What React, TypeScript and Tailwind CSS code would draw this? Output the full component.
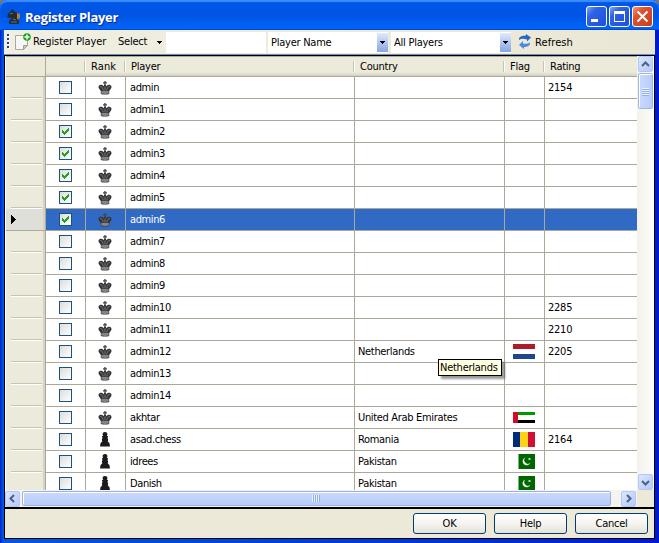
import React from "react";

type Row = { name: string; checked?: boolean; selected?: boolean; pawn?: boolean; country?: string; flag?: string; rating?: string };

const rows: Row[] = [
  { name: "admin", rating: "2154" },
  { name: "admin1" },
  { name: "admin2", checked: true },
  { name: "admin3", checked: true },
  { name: "admin4", checked: true },
  { name: "admin5", checked: true },
  { name: "admin6", checked: true, selected: true },
  { name: "admin7" },
  { name: "admin8" },
  { name: "admin9" },
  { name: "admin10", rating: "2285" },
  { name: "admin11", rating: "2210" },
  { name: "admin12", country: "Netherlands", flag: "nl", rating: "2205" },
  { name: "admin13" },
  { name: "admin14" },
  { name: "akhtar", country: "United Arab Emirates", flag: "ae" },
  { name: "asad.chess", pawn: true, country: "Romania", flag: "ro", rating: "2164" },
  { name: "idrees", pawn: true, country: "Pakistan", flag: "pk" },
  { name: "Danish", pawn: true, country: "Pakistan", flag: "pk" },
];

function King() {
  return (
    <svg width="14" height="14" viewBox="0 0 14 14">
      <path d="M6.300 0h1.400v1.200h1.300v1.200h-1.300v1.400h-1.400V2.400H5V1.200h1.300z" fill="#4a4a4a" />
      <path d="M7 3.400c1 0 1.400 1 1.200 2C9.200 4 10.600 3.500 12 4c1.700.6 1.900 2.300.8 3.700L11.200 10v3q-4.200 1.200-8.400 0v-3L1.200 7.700C.1 6.300.3 4.600 2 4c1.400-.5 2.800 0 3.800 1.400-.2-1 .2-2 1.200-2z" fill="#343434" />
      <path d="M2 5.700q1.500-.8 2.700 1.500L5.200 9.500M12 5.700q-1.500-.8-2.700 1.500L8.800 9.500M7 5.500v3.500" fill="none" stroke="#777" strokeWidth="1" />
      <path d="M3.200 10.200q3.800-1 7.600 0v2.300q-3.800.8-7.600 0z" fill="#858585" />
    </svg>
  );
}

function Pawn() {
  return (
    <svg width="12" height="15" viewBox="0 0 12 15">
      <path d="M6 0C7.700 0 8.600 1 8.400 2.400L7.800 3.500 9.200 4.600 8.500 5.700 9.200 8 8.700 9.500 10.400 11 11 14.500H1L1.600 11 3.300 9.500 2.800 8 3.500 5.700 2.800 4.600 4.200 3.500 3.600 2.400C3.400 1 4.300 0 6 0z" fill="#1c191a" />
    </svg>
  );
}

function Check({ on }: { on?: boolean }) {
  return (
    <span className="block h-[13px] w-[13px] border border-[#1c5180] bg-linear-to-br from-[#dcdcd7] to-white">
      {on && (
        <svg className="block" width="11" height="11" viewBox="0 0 11 11" shapeRendering="crispEdges">
          <path d="M2 4h1v1h1v1h1V5h1V4h1V3h1V2h1v3H8v1H7v1H6v1H5v1H4V8H3V7H2z" fill="#21a121" />
        </svg>
      )}
    </span>
  );
}

function Flag({ code }: { code?: string }) {
  if (code === "nl")
    return (
      <svg width="22" height="15"><path d="M0 0h22v15H0z" fill="#fff" /><path d="M0 0h22v5H0z" fill="#ae1c28" /><path d="M0 10h22v5H0z" fill="#21468b" /></svg>
    );
  if (code === "ae")
    return (
      <svg width="22" height="11" shapeRendering="crispEdges"><path d="M0 0h22v11H0z" fill="#fff" /><path d="M5 0h17v3H5z" fill="#009a00" /><path d="M5 8h17v3H5z" /><path d="M0 0h5v11H0z" fill="#d40a28" /></svg>
    );
  if (code === "ro")
    return (
      <svg width="22" height="15" shapeRendering="crispEdges"><path d="M0 0h7v15H0z" fill="#002b7f" /><path d="M7 0h8v15H7z" fill="#fcd116" /><path d="M15 0h7v15h-7z" fill="#d21034" /></svg>
    );
  if (code === "pk")
    return (
      <svg className="ml-[5px]" width="17" height="15"><path d="M0 0h17v15H0z" fill="#006600" /><path d="M0 0h1v15H0z" fill="#7fb27f" /><path d="M7.500 3.500A4 4 0 1 0 12.300 8.800 3.400 3.400 0 0 1 7.500 3.500z" fill="#e8f3e8" /><path d="M10.500 4h2v2h-2z" fill="#b9d8b9" /></svg>
    );
  return null;
}

function HeaderCell({ label, className }: { label: string; className: string }) {
  return (
    <div className={`flex h-full items-center ${className}`}>
      <span className="h-[11px] w-[2px] shrink-0 border-l border-[#c7c5b2] bg-white" />
      <span className="pl-[5px]">{label}</span>
    </div>
  );
}

function Combo({ label }: { label: string }) {
  return (
    <div className="flex h-[21px] w-[120px] bg-white">
      <span className="flex-1 pl-[3px] leading-[22px]">{label}</span>
      <span className="mt-px flex h-[19px] w-[11px] items-center justify-center bg-linear-to-b from-[#dfebfd] to-[#85a6e0]">
        <svg width="5" height="3" shapeRendering="crispEdges"><path d="M0 0h5v1H4v1H3v1H2V2H1V1H0z" /></svg>
      </span>
    </div>
  );
}

function Arrow({ d }: { d: string }) {
  return (
    <span className="flex h-[16px] w-[15px] shrink-0 items-center justify-center rounded-[2px] border border-[#b2c7f5] bg-linear-to-br from-[#dce7ff] to-[#b4c9f9]">
      <svg width="9" height="9" viewBox="0 0 9 9"><path d={d} fill="none" stroke="#4d6185" strokeWidth="2" /></svg>
    </span>
  );
}

function WinButton({ red, children }: { red?: boolean; children: React.ReactNode }) {
  return (
    <span className={`flex h-[21px] w-[21px] items-center justify-center rounded-[3px] border border-white ${red ? "bg-linear-to-br from-[#f09a80] via-[#e25331] via-30% to-[#c83c14]" : "bg-linear-to-br from-[#7da4f8] via-[#2e62e8] via-30% to-[#1e4fd8]"}`}>
      <svg width="19" height="19" viewBox="0 0 19 19" shapeRendering={red ? "auto" : "crispEdges"}>{children}</svg>
    </span>
  );
}

function Button({ label }: { label: string }) {
  return (
    <button className="h-[21px] w-[73px] rounded-[3px] border border-[#003c74] bg-linear-to-b from-white via-[#f5f4ef] to-[#e4e2d8] text-center leading-[19px]">{label}</button>
  );
}

export default function App() {
  return (
    <div className="relative h-[543px] w-[659px] overflow-hidden bg-[#7d7968] font-['DejaVu_Sans_Condensed','DejaVu_Sans',sans-serif] text-[11px] leading-[14px] tracking-[-0.25px] text-black">
      <div className="flex h-full flex-col rounded-t-[7px] bg-linear-to-r from-[#0019cf] via-[#0855dd] via-[3px] to-[#0019cf]">
        <div className="flex h-[30px] shrink-0 items-center rounded-t-[7px] bg-linear-to-b from-[#0058e6] via-[#0054e3] via-50% to-[#0066fb] pl-[7px] pr-[6px] pt-[3px] shadow-[inset_0_2px_1px_#3c8dff,inset_0_-1px_0_#0048d0]">
          <svg width="14" height="16" viewBox="0 0 14 16">
            <path d="M10 4l3 1v4l-3 2z" fill="#b77c39" />
            <path d="M1 5L4 2l1-2 2 2 3 2v6l2 2v3H2v-3l3-3H3L0 8z" fill="#242a32" />
            <path d="M3 5l3-1M6 10l3 1M4 13h6" stroke="#66717b" />
          </svg>
          <span className="ml-[4px] flex-1 font-['Open_Sans',sans-serif] text-[13px] font-bold leading-[18px] tracking-[-0.3px] text-white [text-shadow:1px_1px_#0a2a88]">Register Player</span>
          <div className="flex gap-[2px]">
            <WinButton><path d="M4 12h7v3H4z" fill="white" /></WinButton>
            <WinButton><path d="M4 4h11v11H4zM5 7v7h9V7z" fill="white" fillRule="evenodd" /></WinButton>
            <WinButton red><path d="M4.500 4.500l10 10m0-10l-10 10" stroke="white" strokeWidth="2" /></WinButton>
          </div>
        </div>

        <div className="mx-[4px] flex h-[26px] shrink-0 items-start border-b border-black bg-linear-to-r from-[#f1efe3] to-[#eae7d6] pt-[2px] shadow-[inset_0_-1px_0_#6c8fc6]">
          <div className="ml-[3px] mt-[2px] flex h-[14px] w-[2px] flex-col justify-between">
            {[0, 1, 2, 3].map((i) => <span key={i} className="h-[2px] w-[2px] bg-[#27417a] shadow-[1px_1px_white]" />)}
          </div>
          <svg className="ml-[6px] mt-px shrink-0" width="16" height="18" viewBox="0 0 16 18">
            <path d="M.5 2.500h12v10l-4 4h-8z" fill="#f7f8f5" stroke="#a5a9a2" />
            <path d="M12.500 12.500h-4v4z" fill="#c5c9c2" stroke="#9ca099" />
            <circle cx="12" cy="4" r="3.800" fill="#18a51c" />
            <path d="M12 1.500v5M9.500 4h5" stroke="white" strokeWidth="1.500" />
          </svg>
          <span className="ml-[2px] mt-[3px] w-[85px] whitespace-nowrap tracking-[-0.1px]">Register Player</span>
          <span className="mt-[3px] w-[39px]">Select</span>
          <svg className="mt-[9px]" width="5" height="3" shapeRendering="crispEdges"><path d="M0 0h5v1H4v1H3v1H2V2H1V1H0z" /></svg>
          <div className="ml-[4px] mr-[2px] h-[21px] w-[100px] bg-white" />
          <Combo label="Player Name" />
          <div className="w-[3px]" />
          <Combo label="All Players" />
          <svg className="ml-[7px] mt-[1px]" width="14" height="17" viewBox="0 0 14 17">
            <path d="M1 7V5.500Q2 2.500 8 2.500V1l5 3.500-4 4V6.500Q4 5 1 7z" fill="#2b66c7" />
            <path d="M12 9.500V11q-1 3-6 3v2l-5-4 4-4v2.500q4 1 7-1z" fill="#4b8ae0" />
          </svg>
          <span className="ml-[3px] mt-[4px] tracking-[0.1px]">Refresh</span>
        </div>

        <div className="mx-[4px] flex h-[483px] shrink-0 flex-col border-x border-b border-black bg-[#ece9d8]">
          <div className="flex h-[434px] shrink-0 overflow-hidden">
            <div className="w-[632px] overflow-hidden border-l border-white bg-white">
              <div className="flex h-[21px] items-center border-b border-t border-b-[#aca899] border-t-[#aca899] bg-linear-to-b from-[#ebeadb] from-80% to-[#d4d0c0]">
                <span className="h-full w-[40px] shrink-0 border-r border-[#aca899] bg-[#ece9d8]" />
                <span className="w-[38px]" />
                <HeaderCell label="Rank" className="w-[40px] tracking-[0.1px]" />
                <HeaderCell label="Player" className="w-[229px]" />
                <HeaderCell label="Country" className="w-[150px]" />
                <HeaderCell label="Flag" className="w-[40px]" />
                <HeaderCell label="Rating" className="flex-1" />
              </div>
              {rows.map((r) => (
                <div key={r.name} className={`flex h-[22px] ${r.selected ? "bg-[#316ac5] text-white" : "bg-white"}`}>
                  <div className={`flex w-[40px] shrink-0 items-center border-r border-[#aca899] pl-[5px] shadow-[inset_-2px_0_0_#d6d2c2] ${r.selected ? "border-b bg-[#dedfd8]" : "bg-[#ebeadb]"}`}>
                    {r.selected ? (
                      <svg width="5" height="9" shapeRendering="crispEdges"><path d="M0 0h1v1h1v1h1v1h1v1h1v1H4v1H3v1H2v1H1v1H0z" fill="black" /></svg>
                    ) : (
                      <span className="mr-[3px] h-[2px] flex-1 self-end border-t border-[#c7c5b2] bg-white" />
                    )}
                  </div>
                  <div className="flex w-[40px] shrink-0 items-center justify-center border-b border-r border-[#aca899]"><Check on={r.checked} /></div>
                  <div className="flex w-[40px] shrink-0 items-center justify-center border-b border-r border-[#aca899] pr-px">{r.pawn ? <Pawn /> : <King />}</div>
                  <div className="w-[229px] shrink-0 border-b border-r border-[#aca899] pl-[4px] leading-[22px] tracking-[-0.4px]">{r.name}</div>
                  <div className="w-[150px] shrink-0 border-b border-r border-[#aca899] pl-[3px] leading-[22px] tracking-[-0.33px]">{r.country}</div>
                  <div className="flex w-[40px] shrink-0 items-center border-b border-r border-[#aca899] pl-[8px]"><Flag code={r.flag} /></div>
                  <div className="flex-1 border-b border-[#aca899] pl-[3px] leading-[22px]">{r.rating}</div>
                </div>
              ))}
            </div>
            <div className="flex flex-1 flex-col items-center justify-between bg-linear-to-r from-[#f2f1ea] to-[#fdfdfa]">
              <Arrow d="M1 6l3.500-3.500L8 6" />
              <div className="mb-auto mt-px flex h-[36px] w-[15px] flex-col items-center justify-center gap-px rounded-[2px] border border-[#9fb5e6] bg-linear-to-r from-[#cad9ff] to-[#b8cbf9] shadow-[inset_1px_1px_white]">
                {[0, 1, 2, 3].map((i) => <span key={i} className="h-px w-[7px] bg-[#eef4fe] shadow-[0_1px_#8cb0f8]" />)}
              </div>
              <Arrow d="M1 3l3.500 3.500L8 3" />
            </div>
          </div>

          <div className="flex h-[17px] shrink-0 items-center bg-[#ece9d8] pr-[17px]">
            <div className="flex h-full flex-1 items-center bg-[#f5f4ef] pr-px">
              <Arrow d="M6 1L2.500 4.500 6 8" />
              <div className="ml-[2px] flex h-[15px] w-[589px] items-center justify-center gap-px rounded-[2px] border border-[#98b0e5] bg-linear-to-b from-[#cad9ff] to-[#b8cbf9] pr-[3px] shadow-[inset_1px_1px_white]">
                {[0, 1, 2, 3].map((i) => <span key={i} className="h-[7px] w-px bg-[#eef4fe] shadow-[1px_0_#8cb0f8]" />)}
              </div>
              <span className="flex-1" />
              <Arrow d="M3 1l3.500 3.500L3 8" />
            </div>
          </div>

          <div className="flex flex-1 justify-end gap-[8px] border-t-2 border-black pr-[6px] pt-[4px]">
            <Button label="OK" />
            <Button label="Help" />
            <Button label="Cancel" />
          </div>
        </div>
      </div>
      <div className="absolute left-[438px] top-[359px] h-[17px] w-[64px] border border-black bg-[#ffffe1] pl-[1px] leading-[16px] shadow-[3px_3px_2px_rgba(0,0,0,0.4)]">Netherlands</div>
    </div>
  );
}
